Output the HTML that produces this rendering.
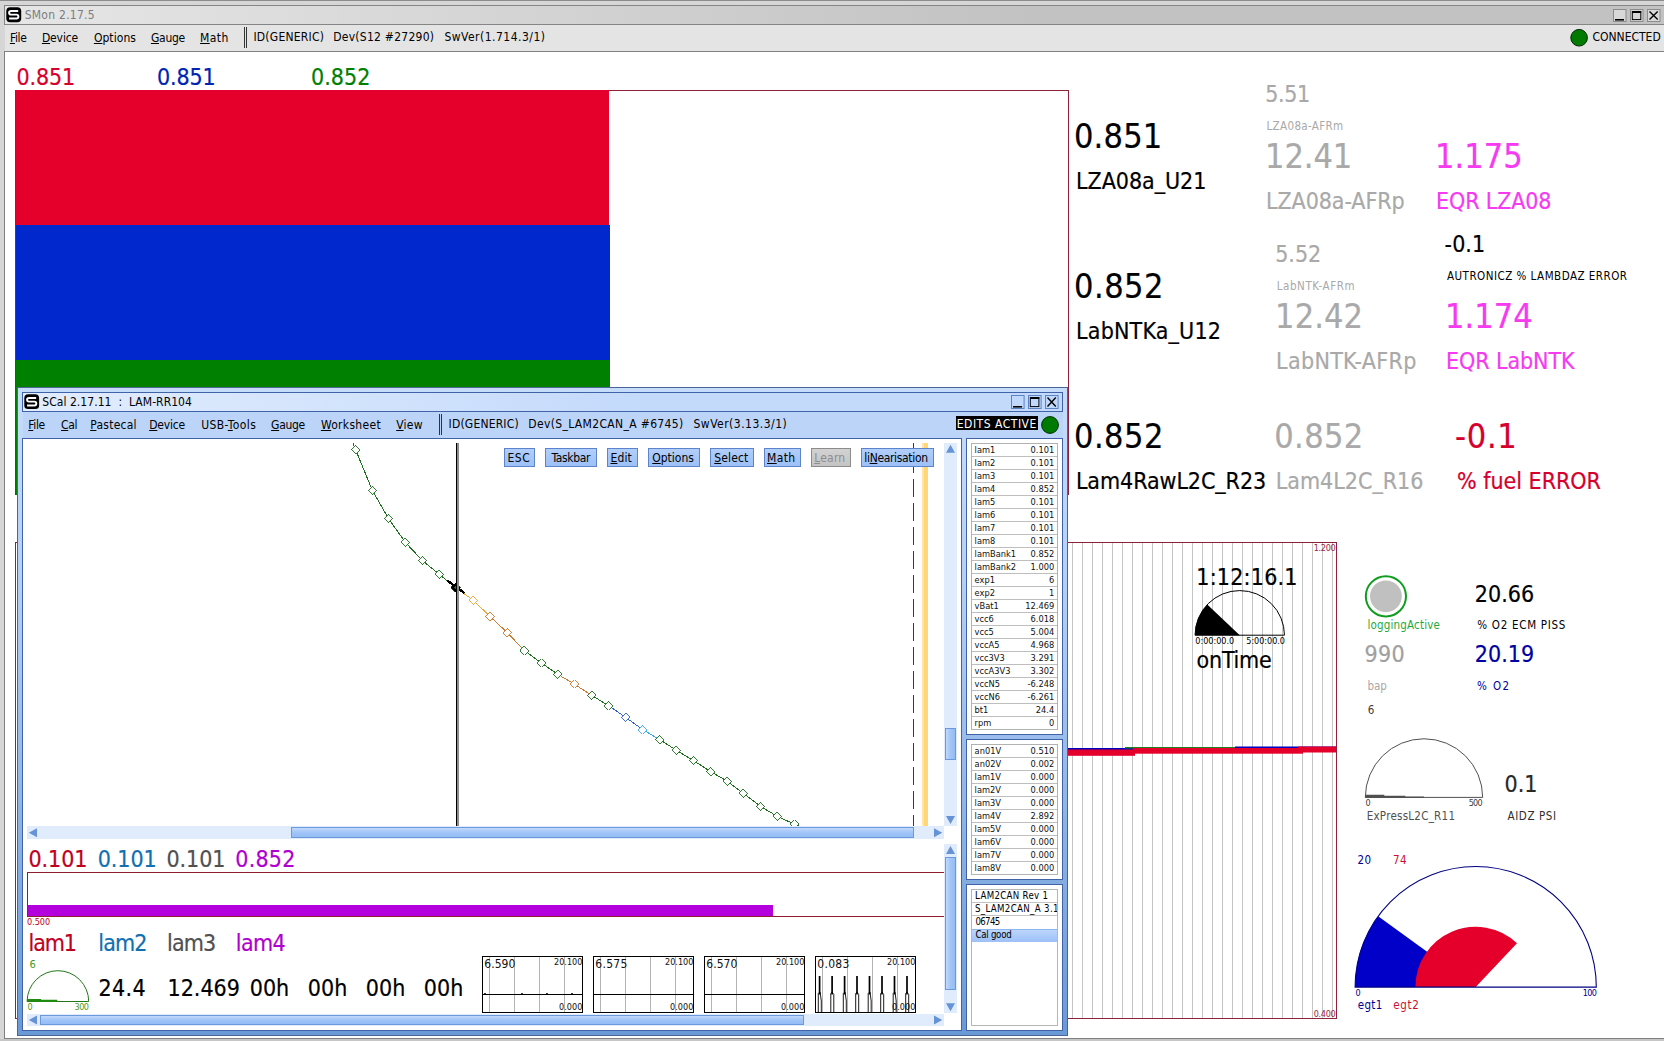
<!DOCTYPE html>
<html><head><meta charset="utf-8"><title>SMon 2.17.5</title>
<style>
html,body{margin:0;padding:0;}
body{width:1664px;height:1041px;overflow:hidden;background:#fff;position:relative;
 font-family:"DejaVu Sans Condensed","DejaVu Sans","Liberation Sans",sans-serif;font-stretch:condensed;}
.t{position:absolute;line-height:0;white-space:nowrap;}
.b{position:absolute;box-sizing:border-box;}
u{text-decoration:underline;text-underline-offset:1px;}
svg{position:absolute;overflow:visible;}
</style></head><body>

<div class="b" style="left:0px;top:0px;width:1664px;height:1041px;background:#d6d6d6;"></div>
<div class="b" style="left:0px;top:0px;width:1664px;height:1px;background:#8c8c8c;"></div>
<div class="b" style="left:4px;top:5px;width:1664px;height:20px;border:1px solid #858585;background:linear-gradient(90deg,#e6e6e6 0,#c2c2c2 62%,#c2c2c2 100%);"></div>
<div class="b" style="left:5px;top:25px;width:1660px;height:26px;background:#e4e4e4;"></div>
<div class="b" style="left:4px;top:51px;width:1664px;height:988px;background:#fff;border:1px solid #808080;border-right:none;"></div>
<div class="b" style="left:0px;top:1039px;width:1664px;height:2px;background:#c6c6c6;"></div>
<svg style="left:6.2px;top:7.2px" width="15.5" height="15.5" viewBox="0 0 16 16"><rect x="0.3" y="0.3" width="15.4" height="15.4" rx="4" fill="#000"/><path d="M12.6 4.1H5.2Q3.2 4.1 3.2 6T5.2 7.9H10.8Q12.8 7.9 12.8 9.9T10.8 11.9H3.2" fill="none" stroke="#fff" stroke-width="2"/></svg>
<div class="t" style="left:24.70px;top:15.00px;font-size:12px;color:#7d7d7d;letter-spacing:0.255px;">SMon 2.17.5</div>
<svg style="left:1613px;top:8.5px" width="13.5" height="13" viewBox="0 0 13.5 13"><rect x="0.5" y="0.5" width="12.5" height="12" fill="#d8d8d8" stroke="#8c8c8c"/><path d="M2 10.8H11.0" stroke="#000" stroke-width="1.6"/></svg>
<svg style="left:1630px;top:8.5px" width="13.5" height="13" viewBox="0 0 13.5 13"><rect x="0.5" y="0.5" width="12.5" height="12" fill="#d8d8d8" stroke="#8c8c8c"/><rect x="2.3" y="2.6" width="8.5" height="8" fill="none" stroke="#000" stroke-width="1"/><path d="M2 3H11.2" stroke="#000" stroke-width="2"/></svg>
<svg style="left:1647px;top:8.5px" width="13.5" height="13" viewBox="0 0 13.5 13"><rect x="0.5" y="0.5" width="12.5" height="12" fill="#d8d8d8" stroke="#8c8c8c"/><path d="M2.5 2.5L10.7 10.5M10.7 2.5L2.5 10.5" stroke="#000" stroke-width="1.4"/></svg>
<div class="t" style="left:9.90px;top:38.00px;font-size:12px;color:#000;letter-spacing:-0.313px;"><u>F</u>ile</div>
<div class="t" style="left:41.90px;top:38.00px;font-size:12px;color:#000;letter-spacing:-0.116px;"><u>D</u>evice</div>
<div class="t" style="left:93.90px;top:38.00px;font-size:12px;color:#000;letter-spacing:0.062px;"><u>O</u>ptions</div>
<div class="t" style="left:150.90px;top:38.00px;font-size:12px;color:#000;letter-spacing:-0.245px;"><u>G</u>auge</div>
<div class="t" style="left:200.10px;top:38.00px;font-size:12px;color:#000;letter-spacing:0.413px;"><u>M</u>ath</div>
<div class="b" style="left:244px;top:27px;width:1px;height:21px;background:#333;"></div>
<div class="b" style="left:246px;top:27px;width:1px;height:21px;background:#333;"></div>
<div class="t" style="left:253.40px;top:37.00px;font-size:12px;color:#000;letter-spacing:0.229px;">ID(GENERIC)</div>
<div class="t" style="left:333.20px;top:37.00px;font-size:12px;color:#000;letter-spacing:0.260px;">Dev(S12 #27290)</div>
<div class="t" style="left:444.40px;top:37.00px;font-size:12px;color:#000;letter-spacing:0.485px;">SwVer(1.714.3/1)</div>
<svg style="left:1569px;top:28px" width="20" height="20"><circle cx="10.1" cy="9.75" r="8.3" fill="#007a00" stroke="#002800" stroke-width="1"/></svg>
<div class="t" style="left:1592.50px;top:37.00px;font-size:12px;color:#000;letter-spacing:-0.007px;">CONNECTED</div>
<div class="t" style="left:16.50px;top:77.00px;font-size:23px;color:#d8002c;letter-spacing:-0.114px;-webkit-text-stroke:0.2px;">0.851</div>
<div class="t" style="left:156.90px;top:77.00px;font-size:23px;color:#0024b0;letter-spacing:-0.114px;-webkit-text-stroke:0.2px;">0.851</div>
<div class="t" style="left:311.00px;top:77.00px;font-size:23px;color:#008000;letter-spacing:0.048px;-webkit-text-stroke:0.2px;">0.852</div>
<div class="b" style="left:15px;top:90px;width:1054px;height:405px;border:1px solid #8e2038;border-bottom:none;"></div>
<div class="b" style="left:16px;top:90px;width:593px;height:135px;background:#e4002b;"></div>
<div class="b" style="left:16px;top:225px;width:594px;height:135px;background:#0028cc;"></div>
<div class="b" style="left:16px;top:360px;width:594px;height:135px;background:#008000;"></div>
<div class="t" style="left:1074.00px;top:136.00px;font-size:34px;color:#000;letter-spacing:0.167px;-webkit-text-stroke:0.2px;">0.851</div>
<div class="t" style="left:1076.10px;top:181.00px;font-size:23px;color:#000;letter-spacing:-0.039px;-webkit-text-stroke:0.2px;">LZA08a_U21</div>
<div class="t" style="left:1265.25px;top:94.00px;font-size:23px;color:#a9a9a9;letter-spacing:-0.348px;-webkit-text-stroke:0.2px;">5.51</div>
<div class="t" style="left:1266.50px;top:126.00px;font-size:11.5px;color:#a9a9a9;letter-spacing:0.348px;">LZA08a-AFRm</div>
<div class="t" style="left:1265.10px;top:156.00px;font-size:34px;color:#a9a9a9;letter-spacing:-0.108px;-webkit-text-stroke:0.2px;">12.41</div>
<div class="t" style="left:1266.10px;top:201.00px;font-size:23px;color:#a9a9a9;letter-spacing:-0.084px;-webkit-text-stroke:0.2px;">LZA08a-AFRp</div>
<div class="t" style="left:1435.10px;top:156.00px;font-size:34px;color:#f63af0;letter-spacing:0.017px;-webkit-text-stroke:0.2px;">1.175</div>
<div class="t" style="left:1436.10px;top:201.00px;font-size:23px;color:#f63af0;letter-spacing:-0.145px;-webkit-text-stroke:0.2px;">EQR LZA08</div>
<div class="t" style="left:1074.00px;top:286.00px;font-size:34px;color:#000;letter-spacing:0.479px;-webkit-text-stroke:0.2px;">0.852</div>
<div class="t" style="left:1076.10px;top:331.00px;font-size:23px;color:#000;letter-spacing:0.170px;-webkit-text-stroke:0.2px;">LabNTKa_U12</div>
<div class="t" style="left:1275.25px;top:254.00px;font-size:23px;color:#a9a9a9;letter-spacing:-0.048px;-webkit-text-stroke:0.2px;">5.52</div>
<div class="t" style="left:1276.75px;top:286.00px;font-size:11.5px;color:#a9a9a9;letter-spacing:0.565px;">LabNTK-AFRm</div>
<div class="t" style="left:1275.10px;top:316.00px;font-size:34px;color:#a9a9a9;letter-spacing:0.104px;-webkit-text-stroke:0.2px;">12.42</div>
<div class="t" style="left:1276.10px;top:361.00px;font-size:23px;color:#a9a9a9;letter-spacing:0.315px;-webkit-text-stroke:0.2px;">LabNTK-AFRp</div>
<div class="t" style="left:1444.60px;top:244.00px;font-size:23px;color:#000;letter-spacing:0.067px;-webkit-text-stroke:0.2px;">-0.1</div>
<div class="t" style="left:1447.00px;top:276.00px;font-size:11.5px;color:#000;letter-spacing:0.484px;">AUTRONICZ % LAMBDAZ ERROR</div>
<div class="t" style="left:1445.10px;top:316.00px;font-size:34px;color:#f63af0;letter-spacing:0.017px;-webkit-text-stroke:0.2px;">1.174</div>
<div class="t" style="left:1446.10px;top:361.00px;font-size:23px;color:#f63af0;letter-spacing:-0.095px;-webkit-text-stroke:0.2px;">EQR LabNTK</div>
<div class="t" style="left:1074.00px;top:436.00px;font-size:34px;color:#000;letter-spacing:0.454px;-webkit-text-stroke:0.2px;">0.852</div>
<div class="t" style="left:1075.90px;top:481.00px;font-size:23px;color:#000;letter-spacing:-0.070px;-webkit-text-stroke:0.2px;">Lam4RawL2C_R23</div>
<div class="t" style="left:1274.25px;top:436.00px;font-size:34px;color:#a9a9a9;letter-spacing:0.367px;-webkit-text-stroke:0.2px;">0.852</div>
<div class="t" style="left:1275.75px;top:481.00px;font-size:23px;color:#a9a9a9;letter-spacing:-0.004px;-webkit-text-stroke:0.2px;">Lam4L2C_R16</div>
<div class="t" style="left:1455.00px;top:436.00px;font-size:34px;color:#d6002e;letter-spacing:0.697px;-webkit-text-stroke:0.2px;">-0.1</div>
<div class="t" style="left:1457.10px;top:481.00px;font-size:23px;color:#d6002e;letter-spacing:-0.026px;-webkit-text-stroke:0.2px;">% fuel ERROR</div>
<svg style="left:0;top:0" width="1664" height="1041">
<path d="M1072.5 543V1018M1082.5 543V1018M1092.5 543V1018M1102.5 543V1018M1112.5 543V1018M1122.5 543V1018M1132.5 543V1018M1142.5 543V1018M1152.5 543V1018M1162.5 543V1018M1172.5 543V1018M1182.5 543V1018M1192.5 543V1018M1202.5 543V1018M1212.5 543V1018M1222.5 543V1018M1232.5 543V1018M1242.5 543V1018M1252.5 543V1018M1262.5 543V1018M1272.5 543V1018M1282.5 543V1018M1292.5 543V1018M1302.5 543V1018M1312.5 543V1018M1322.5 543V1018M1332.5 543V1018" stroke="#c4c4c4" stroke-width="1" fill="none"/>
<rect x="1067" y="748" width="66" height="2" fill="#0000c0"/>
<rect x="1067" y="749.5" width="68" height="6.3" fill="#e4002b"/>
<rect x="1125" y="747" width="110" height="1.5" fill="#208020"/>
<rect x="1235" y="746.5" width="102" height="1.5" fill="#0000c0"/>
<rect x="1133" y="748" width="170" height="5.7" fill="#e4002b"/>
<rect x="1298" y="746.5" width="39" height="6" fill="#e4002b"/>
<rect x="15.5" y="542.5" width="1321" height="476" fill="none" stroke="#8e2038" stroke-width="1"/>
<path d="M1195.05 635.2A44.7 44.7 0 0 1 1284.45 635.2Z" fill="none" stroke="#000" stroke-width="1"/>
<path d="M1239.75 635.2L1195.05 635.2A44.7 44.7 0 0 1 1207.27 604.49Z" fill="#000"/>
<path d="M1365.3 797.4A58.7 58.7 0 0 1 1482.7 797.4Z" fill="#fff" stroke="#505050" stroke-width="1"/>
<path d="M1365.3 797.9V794.8H1384.3V795.6999999999999H1405.3V796.6H1424V797.9Z" fill="#505050"/>
<path d="M1475.7 987.1L1355.1000000000001 987.1A120.6 120.6 0 0 1 1378.13 916.21Z" fill="#0000c8"/>
<path d="M1475.7 987.1L1415.4 987.1A60.3 60.3 0 0 1 1516.98 943.14Z" fill="#e4002b"/>
<path d="M1355.1000000000001 987.1A120.6 120.6 0 0 1 1596.3 987.1Z" fill="none" stroke="#000080" stroke-width="1.1"/>
<circle cx="1385.9" cy="596.3" r="20.1" fill="#fff" stroke="#0f9d1f" stroke-width="2"/><circle cx="1385.9" cy="596.3" r="15.9" fill="#c0c0c0"/>
</svg>
<div class="t" style="left:1313.70px;top:548.00px;font-size:9px;color:#a0203c;letter-spacing:-0.280px;">1.200</div>
<div class="t" style="left:1313.70px;top:1014.00px;font-size:9px;color:#a0203c;letter-spacing:-0.280px;">0.400</div>
<div class="t" style="left:1196.30px;top:577.00px;font-size:23px;color:#000;letter-spacing:0.209px;-webkit-text-stroke:0.2px;">1:12:16.1</div>
<div class="t" style="left:1196.60px;top:660.00px;font-size:23px;color:#000;letter-spacing:-0.242px;-webkit-text-stroke:0.2px;">onTime</div>
<div class="t" style="left:1195.30px;top:641.00px;font-size:9px;color:#000;letter-spacing:-0.010px;">0:00:00.0</div>
<div class="t" style="left:1246.30px;top:641.00px;font-size:9px;color:#000;letter-spacing:-0.035px;">5:00:00.0</div>
<div class="t" style="left:1367.50px;top:625.00px;font-size:11.5px;color:#1fa83a;letter-spacing:0.170px;">loggingActive</div>
<div class="t" style="left:1474.80px;top:594.00px;font-size:23px;color:#000;letter-spacing:0.036px;-webkit-text-stroke:0.2px;">20.66</div>
<div class="t" style="left:1477.30px;top:625.00px;font-size:11.5px;color:#000;letter-spacing:0.712px;">% O2 ECM PISS</div>
<div class="t" style="left:1364.60px;top:654.00px;font-size:23px;color:#a0a0a0;letter-spacing:0.238px;-webkit-text-stroke:0.2px;">990</div>
<div class="t" style="left:1367.50px;top:686.00px;font-size:11.5px;color:#a8a8a8;letter-spacing:-0.080px;">bap</div>
<div class="t" style="left:1474.80px;top:654.00px;font-size:23px;color:#0000a0;letter-spacing:0.036px;-webkit-text-stroke:0.2px;">20.19</div>
<div class="t" style="left:1477.00px;top:686.00px;font-size:11.5px;color:#0000a0;letter-spacing:1.447px;">% O2</div>
<div class="t" style="left:1367.70px;top:710.00px;font-size:11.5px;color:#404040;letter-spacing:0.000px;">6</div>
<div class="t" style="left:1365.50px;top:803.00px;font-size:9px;color:#404040;letter-spacing:-0.700px;">0</div>
<div class="t" style="left:1468.70px;top:803.00px;font-size:9px;color:#404040;letter-spacing:-0.750px;">500</div>
<div class="t" style="left:1366.70px;top:816.00px;font-size:11.5px;color:#505050;letter-spacing:0.258px;">ExPressL2C_R11</div>
<div class="t" style="left:1504.50px;top:784.00px;font-size:23px;color:#282828;letter-spacing:0.034px;-webkit-text-stroke:0.2px;">0.1</div>
<div class="t" style="left:1507.50px;top:816.00px;font-size:11.5px;color:#303030;letter-spacing:0.604px;">AIDZ PSI</div>
<div class="t" style="left:1357.40px;top:860.00px;font-size:11.5px;color:#000090;letter-spacing:0.619px;">20</div>
<div class="t" style="left:1392.90px;top:860.00px;font-size:11.5px;color:#cc1030;letter-spacing:0.619px;">74</div>
<div class="t" style="left:1355.60px;top:993.00px;font-size:9px;color:#000090;letter-spacing:-0.700px;">0</div>
<div class="t" style="left:1582.80px;top:993.00px;font-size:9px;color:#000090;letter-spacing:-0.700px;">100</div>
<div class="t" style="left:1357.80px;top:1005.00px;font-size:11.5px;color:#000090;letter-spacing:0.303px;">egt1</div>
<div class="t" style="left:1393.30px;top:1005.00px;font-size:11.5px;color:#cc1030;letter-spacing:0.636px;">egt2</div>
<div class="b" style="left:17px;top:387px;width:1051px;height:649px;border:1px solid #4a6696;background:linear-gradient(180deg,#c6dcfb 0,#b4cff6 30%,#6a9ad6 100%);"></div>
<div class="b" style="left:22px;top:392px;width:1041px;height:20px;border:1px solid #3f62a8;background:linear-gradient(90deg,#e2edfd 0,#c4dafb 60%,#c4dafb 100%);"></div>
<svg style="left:24.3px;top:394.2px" width="15.4" height="15.4" viewBox="0 0 16 16"><rect x="0.3" y="0.3" width="15.4" height="15.4" rx="4" fill="#000"/><path d="M12.6 4.1H5.2Q3.2 4.1 3.2 6T5.2 7.9H10.8Q12.8 7.9 12.8 9.9T10.8 11.9H3.2" fill="none" stroke="#fff" stroke-width="2"/></svg>
<div class="t" style="left:42.30px;top:402.00px;font-size:12px;color:#000;letter-spacing:0.044px;">SCal 2.17.11&nbsp; :&nbsp; LAM-RR104</div>
<svg style="left:1011.0px;top:394.6px" width="13.6" height="14" viewBox="0 0 13.6 14"><rect x="0.5" y="0.5" width="12.6" height="13" fill="#c0d8fb" stroke="#5c82c8"/><path d="M2 11.8H11.1" stroke="#000" stroke-width="1.6"/></svg>
<svg style="left:1028.1px;top:394.6px" width="13.6" height="14" viewBox="0 0 13.6 14"><rect x="0.5" y="0.5" width="12.6" height="13" fill="#c0d8fb" stroke="#5c82c8"/><rect x="2.3" y="2.6" width="8.6" height="9" fill="none" stroke="#000" stroke-width="1"/><path d="M2 3H11.3" stroke="#000" stroke-width="2"/></svg>
<svg style="left:1045.2px;top:394.6px" width="13.6" height="14" viewBox="0 0 13.6 14"><rect x="0.5" y="0.5" width="12.6" height="13" fill="#c0d8fb" stroke="#5c82c8"/><path d="M2.5 2.5L10.8 11.5M10.8 2.5L2.5 11.5" stroke="#000" stroke-width="1.4"/></svg>
<div class="b" style="left:23px;top:412px;width:1040px;height:26px;background:#bcd4f8;"></div>
<div class="t" style="left:28.30px;top:425.00px;font-size:12px;color:#000;letter-spacing:-0.379px;"><u>F</u>ile</div>
<div class="t" style="left:61.10px;top:425.00px;font-size:12px;color:#000;letter-spacing:-0.378px;"><u>C</u>al</div>
<div class="t" style="left:90.20px;top:425.00px;font-size:12px;color:#000;letter-spacing:0.252px;"><u>P</u>astecal</div>
<div class="t" style="left:149.20px;top:425.00px;font-size:12px;color:#000;letter-spacing:-0.176px;"><u>D</u>evice</div>
<div class="t" style="left:201.20px;top:425.00px;font-size:12px;color:#000;letter-spacing:0.410px;">USB-<u>T</u>ools</div>
<div class="t" style="left:271.10px;top:425.00px;font-size:12px;color:#000;letter-spacing:-0.320px;"><u>G</u>auge</div>
<div class="t" style="left:320.90px;top:425.00px;font-size:12px;color:#000;letter-spacing:0.310px;"><u>W</u>orksheet</div>
<div class="t" style="left:396.20px;top:425.00px;font-size:12px;color:#000;letter-spacing:0.245px;"><u>V</u>iew</div>
<div class="b" style="left:439px;top:414px;width:1px;height:21px;background:#333;"></div>
<div class="b" style="left:441px;top:414px;width:1px;height:21px;background:#333;"></div>
<div class="t" style="left:448.60px;top:424.00px;font-size:12px;color:#000;letter-spacing:0.179px;">ID(GENERIC)</div>
<div class="t" style="left:528.30px;top:424.00px;font-size:12px;color:#000;letter-spacing:0.348px;">Dev(S_LAM2CAN_A #6745)</div>
<div class="t" style="left:693.50px;top:424.00px;font-size:12px;color:#000;letter-spacing:0.481px;">SwVer(3.13.3/1)</div>
<div class="b" style="left:956px;top:416px;width:81.8px;height:13.8px;background:#000;"></div>
<div class="t" style="left:956.75px;top:424.00px;font-size:12px;color:#fff;letter-spacing:0.517px;">EDITS ACTIVE</div>
<svg style="left:1040px;top:415px" width="20" height="20"><circle cx="10" cy="10" r="8.4" fill="#007a00" stroke="#003000" stroke-width="1"/></svg>
<div class="b" style="left:22px;top:438px;width:940px;height:593px;border:1px solid #3f62a8;background:#fff;"></div>
<div class="b" style="left:966px;top:438px;width:97px;height:297px;border:1px solid #3f62a8;background:#fff;"></div>
<div class="b" style="left:966px;top:739px;width:97px;height:141px;border:1px solid #3f62a8;background:#fff;"></div>
<div class="b" style="left:966px;top:884px;width:97px;height:147px;border:1px solid #3f62a8;background:#fff;"></div>
<svg style="left:23px;top:443px" width="922" height="383" viewBox="23 443 922 383"><defs><clipPath id="cp"><rect x="23" y="443" width="922" height="383"/></clipPath></defs><g clip-path="url(#cp)" fill="none" stroke-width="1" shape-rendering="crispEdges">
<path d="M353 443L355.5 449.5" stroke="#1f6f1f"/>
<path d="M355.5 449.5L372.5 490.7" stroke="#1f6f1f"/>
<path d="M372.5 490.7L388.5 518.7" stroke="#1f6f1f"/>
<path d="M388.5 518.7L405.4 542.4" stroke="#1f6f1f"/>
<path d="M405.4 542.4L422.4 560.6" stroke="#1f6f1f"/>
<path d="M422.4 560.6L439.4 574.4" stroke="#1f6f1f"/>
<path d="M439.4 574.4L455.9 587.9" stroke="#1f6f1f"/>
<path d="M455.9 587.9L473.4 600.3" stroke="#e8a840"/>
<path d="M473.4 600.3L490.1 616.6" stroke="#e8a840"/>
<path d="M490.1 616.6L507.3 632.6" stroke="#cc7a30"/>
<path d="M507.3 632.6L524.3 650.5" stroke="#cc7a30"/>
<path d="M524.3 650.5L541.3 663" stroke="#1f6f1f"/>
<path d="M541.3 663L557.8 674.3" stroke="#1f6f1f"/>
<path d="M557.8 674.3L574.3 684.1" stroke="#cc7a30"/>
<path d="M574.3 684.1L591.6 695.3" stroke="#cc7a30"/>
<path d="M591.6 695.3L608.4 705.5" stroke="#1f6f1f"/>
<path d="M608.4 705.5L625.7 717.4" stroke="#2f62c8"/>
<path d="M625.7 717.4L642.6 729.5" stroke="#2f62c8"/>
<path d="M642.6 729.5L659.5 739.5" stroke="#38a8e8"/>
<path d="M659.5 739.5L676.3 750.2" stroke="#1f6f1f"/>
<path d="M676.3 750.2L693.6 760.6" stroke="#1f6f1f"/>
<path d="M693.6 760.6L710.5 771.5" stroke="#1f6f1f"/>
<path d="M710.5 771.5L727.3 781.3" stroke="#1f6f1f"/>
<path d="M727.3 781.3L743.4 793.3" stroke="#1f6f1f"/>
<path d="M743.4 793.3L760.5 806.4" stroke="#1f6f1f"/>
<path d="M760.5 806.4L777.4 816.4" stroke="#1f6f1f"/>
<path d="M777.4 816.4L794.4 824.2" stroke="#1f6f1f"/>
<path d="M794.4 824.2L811 831" stroke="#1f6f1f"/>
<path d="M351.2 449.5L355.5 445.2L359.8 449.5L355.5 453.8Z" fill="#fff" stroke="#1f6f1f" stroke-width="0.9"/>
<path d="M368.2 490.7L372.5 486.4L376.8 490.7L372.5 495.0Z" fill="#fff" stroke="#1f6f1f" stroke-width="0.9"/>
<path d="M384.2 518.7L388.5 514.4L392.8 518.7L388.5 523.0Z" fill="#fff" stroke="#1f6f1f" stroke-width="0.9"/>
<path d="M401.1 542.4L405.4 538.1L409.7 542.4L405.4 546.7Z" fill="#fff" stroke="#1f6f1f" stroke-width="0.9"/>
<path d="M418.1 560.6L422.4 556.3L426.7 560.6L422.4 564.9Z" fill="#fff" stroke="#1f6f1f" stroke-width="0.9"/>
<path d="M435.1 574.4L439.4 570.1L443.7 574.4L439.4 578.7Z" fill="#fff" stroke="#1f6f1f" stroke-width="0.9"/>
<path d="M469.1 600.3L473.4 596.0L477.7 600.3L473.4 604.6Z" fill="#fff" stroke="#e8a840" stroke-width="0.9"/>
<path d="M485.8 616.6L490.1 612.3L494.4 616.6L490.1 620.9Z" fill="#fff" stroke="#cc7a30" stroke-width="0.9"/>
<path d="M503.0 632.6L507.3 628.3L511.6 632.6L507.3 636.9Z" fill="#fff" stroke="#cc7a30" stroke-width="0.9"/>
<path d="M520.0 650.5L524.3 646.2L528.6 650.5L524.3 654.8Z" fill="#fff" stroke="#1f6f1f" stroke-width="0.9"/>
<path d="M537.0 663.0L541.3 658.7L545.6 663.0L541.3 667.3Z" fill="#fff" stroke="#1f6f1f" stroke-width="0.9"/>
<path d="M553.5 674.3L557.8 670.0L562.1 674.3L557.8 678.6Z" fill="#fff" stroke="#1f6f1f" stroke-width="0.9"/>
<path d="M570.0 684.1L574.3 679.8L578.6 684.1L574.3 688.4Z" fill="#fff" stroke="#cc7a30" stroke-width="0.9"/>
<path d="M587.3 695.3L591.6 691.0L595.9 695.3L591.6 699.6Z" fill="#fff" stroke="#1f6f1f" stroke-width="0.9"/>
<path d="M604.1 705.5L608.4 701.2L612.7 705.5L608.4 709.8Z" fill="#fff" stroke="#1f6f1f" stroke-width="0.9"/>
<path d="M621.4 717.4L625.7 713.1L630.0 717.4L625.7 721.7Z" fill="#fff" stroke="#2f62c8" stroke-width="0.9"/>
<path d="M638.3 729.5L642.6 725.2L646.9 729.5L642.6 733.8Z" fill="#fff" stroke="#38a8e8" stroke-width="0.9"/>
<path d="M655.2 739.5L659.5 735.2L663.8 739.5L659.5 743.8Z" fill="#fff" stroke="#1f6f1f" stroke-width="0.9"/>
<path d="M672.0 750.2L676.3 745.9L680.6 750.2L676.3 754.5Z" fill="#fff" stroke="#1f6f1f" stroke-width="0.9"/>
<path d="M689.3 760.6L693.6 756.3L697.9 760.6L693.6 764.9Z" fill="#fff" stroke="#1f6f1f" stroke-width="0.9"/>
<path d="M706.2 771.5L710.5 767.2L714.8 771.5L710.5 775.8Z" fill="#fff" stroke="#1f6f1f" stroke-width="0.9"/>
<path d="M723.0 781.3L727.3 777.0L731.6 781.3L727.3 785.6Z" fill="#fff" stroke="#1f6f1f" stroke-width="0.9"/>
<path d="M739.1 793.3L743.4 789.0L747.7 793.3L743.4 797.6Z" fill="#fff" stroke="#1f6f1f" stroke-width="0.9"/>
<path d="M756.2 806.4L760.5 802.1L764.8 806.4L760.5 810.7Z" fill="#fff" stroke="#1f6f1f" stroke-width="0.9"/>
<path d="M773.1 816.4L777.4 812.1L781.7 816.4L777.4 820.7Z" fill="#fff" stroke="#1f6f1f" stroke-width="0.9"/>
<path d="M790.1 824.2L794.4 819.9L798.7 824.2L794.4 828.5Z" fill="#fff" stroke="#1f6f1f" stroke-width="0.9"/>
<path d="M806.7 831.0L811.0 826.7L815.3 831.0L811.0 835.3Z" fill="#fff" stroke="#1f6f1f" stroke-width="0.9"/>
<path d="M447.3 580.6L464.6 593.1" stroke="#000" stroke-width="2.4"/><path d="M450.8 587.6L455.6 583L460.2 587.6L455.6 592.4Z" fill="#000" stroke="#000" stroke-width="0.8"/><path d="M453.6 587.6l3 -1.8v3.6z" fill="#1f6f1f" stroke="none"/>
<rect x="456" y="443" width="1.2" height="383" fill="#000" stroke="none"/><rect x="457.2" y="443" width="1.8" height="383" fill="#8c8c8c" stroke="none"/>
<path d="M913.5 443V826" stroke="#8e1420" stroke-width="1.1" stroke-dasharray="18 6" stroke-dashoffset="12"/>
<rect x="922" y="443" width="6.3" height="383" fill="#ffd678" stroke="none"/><rect x="922" y="443" width="1.5" height="383" fill="#ffe6a8" stroke="none"/>
</g></svg>
<div class="b" style="left:504px;top:448px;width:31px;height:19px;border:1px solid #5c84cc;background:linear-gradient(180deg,#b2cefa,#9cc0f8);"></div>
<div class="t" style="left:507.50px;top:458.00px;font-size:12px;color:#000;letter-spacing:0.537px;">ESC</div>
<div class="b" style="left:545px;top:448px;width:52px;height:19px;border:1px solid #5c84cc;background:linear-gradient(180deg,#b2cefa,#9cc0f8);"></div>
<div class="t" style="left:551.50px;top:458.00px;font-size:12px;color:#000;letter-spacing:-0.345px;">Taskbar</div>
<div class="b" style="left:607px;top:448px;width:31px;height:19px;border:1px solid #5c84cc;background:linear-gradient(180deg,#b2cefa,#9cc0f8);"></div>
<div class="t" style="left:610.50px;top:458.00px;font-size:12px;color:#000;letter-spacing:0.108px;"><u>E</u>dit</div>
<div class="b" style="left:648px;top:448px;width:52px;height:19px;border:1px solid #5c84cc;background:linear-gradient(180deg,#b2cefa,#9cc0f8);"></div>
<div class="t" style="left:652.25px;top:458.00px;font-size:12px;color:#000;letter-spacing:-0.005px;"><u>O</u>ptions</div>
<div class="b" style="left:710px;top:448px;width:44px;height:19px;border:1px solid #5c84cc;background:linear-gradient(180deg,#b2cefa,#9cc0f8);"></div>
<div class="t" style="left:714.25px;top:458.00px;font-size:12px;color:#000;letter-spacing:0.134px;"><u>S</u>elect</div>
<div class="b" style="left:764px;top:448px;width:37px;height:19px;border:1px solid #5c84cc;background:linear-gradient(180deg,#b2cefa,#9cc0f8);"></div>
<div class="t" style="left:767.00px;top:458.00px;font-size:12px;color:#000;letter-spacing:0.363px;"><u>M</u>ath</div>
<div class="b" style="left:811px;top:448px;width:40px;height:19px;border:1px solid #8c8c8c;background:linear-gradient(180deg,#d2d2d2,#c4c4c4);"></div>
<div class="t" style="left:814.25px;top:458.00px;font-size:12px;color:#8e8e8e;letter-spacing:0.191px;"><u>L</u>earn</div>
<div class="b" style="left:861px;top:448px;width:73px;height:19px;border:1px solid #5c84cc;background:linear-gradient(180deg,#b2cefa,#9cc0f8);"></div>
<div class="t" style="left:864.30px;top:458.00px;font-size:12px;color:#000;letter-spacing:-0.329px;">li<u>N</u>earisation</div>
<div class="b" style="left:27px;top:826.2px;width:917px;height:12.4px;background:#e0ecfc;"></div>
<div class="b" style="left:291px;top:827.2px;width:622.8px;height:10.9px;border:1px solid #6c98dc;background:linear-gradient(180deg,#c2dafc 0,#a4c6f8 45%,#94bcf6 100%);"></div>
<svg style="left:0;top:0" width="1664" height="1041"><path d="M28.8 832.7l8.2 -4.5v9z" fill="#6593d5"/><path d="M942.2 832.7l-8.2 -4.5v9z" fill="#6593d5"/></svg>
<div class="b" style="left:944px;top:443px;width:13px;height:382.79999999999995px;background:#e0ecfc;"></div>
<div class="b" style="left:945px;top:728.3px;width:11px;height:31.300000000000068px;border:1px solid #6c98dc;background:linear-gradient(90deg,#c2dafc 0,#a4c6f8 45%,#94bcf6 100%);"></div>
<svg style="left:0;top:0" width="1664" height="1041"><path d="M950.5 444.8l-4.5 8h9z" fill="#6593d5"/><path d="M950.5 824.0l-4.5 -8h9z" fill="#6593d5"/></svg>
<div class="b" style="left:944px;top:844.3px;width:13px;height:168.70000000000005px;background:#e0ecfc;"></div>
<div class="b" style="left:945px;top:857.1px;width:11px;height:132.89999999999998px;border:1px solid #6c98dc;background:linear-gradient(90deg,#c2dafc 0,#a4c6f8 45%,#94bcf6 100%);"></div>
<svg style="left:0;top:0" width="1664" height="1041"><path d="M950.5 846.0999999999999l-4.5 8h9z" fill="#6593d5"/><path d="M950.5 1011.2l-4.5 -8h9z" fill="#6593d5"/></svg>
<div class="b" style="left:27px;top:1014px;width:917px;height:11.5px;background:#e0ecfc;"></div>
<div class="b" style="left:40px;top:1015px;width:763.6px;height:10.0px;border:1px solid #6c98dc;background:linear-gradient(180deg,#c2dafc 0,#a4c6f8 45%,#94bcf6 100%);"></div>
<svg style="left:0;top:0" width="1664" height="1041"><path d="M28.8 1020.05l8.2 -4.5v9z" fill="#6593d5"/><path d="M942.2 1020.05l-8.2 -4.5v9z" fill="#6593d5"/></svg>
<div class="t" style="left:28.50px;top:859.00px;font-size:23px;color:#c00020;letter-spacing:-0.077px;-webkit-text-stroke:0.2px;">0.101</div>
<div class="t" style="left:97.75px;top:859.00px;font-size:23px;color:#1070b0;letter-spacing:-0.077px;-webkit-text-stroke:0.2px;">0.101</div>
<div class="t" style="left:166.50px;top:859.00px;font-size:23px;color:#505050;letter-spacing:-0.077px;-webkit-text-stroke:0.2px;">0.101</div>
<div class="t" style="left:235.25px;top:859.00px;font-size:23px;color:#b000d0;letter-spacing:0.236px;-webkit-text-stroke:0.2px;">0.852</div>
<div class="b" style="left:27px;top:872px;width:917px;height:45px;border:1px solid #8e1e30;border-right:none;"></div>
<div class="b" style="left:28px;top:905px;width:745px;height:11px;background:#b400dc;"></div>
<div class="t" style="left:27.00px;top:922.00px;font-size:9px;color:#c00020;letter-spacing:-0.005px;">0.500</div>
<div class="t" style="left:28.50px;top:943.00px;font-size:23px;color:#c00020;letter-spacing:-1.113px;-webkit-text-stroke:0.2px;">lam1</div>
<div class="t" style="left:98.25px;top:943.00px;font-size:23px;color:#1070b0;letter-spacing:-0.863px;-webkit-text-stroke:0.2px;">lam2</div>
<div class="t" style="left:167.00px;top:943.00px;font-size:23px;color:#505050;letter-spacing:-0.863px;-webkit-text-stroke:0.2px;">lam3</div>
<div class="t" style="left:235.75px;top:943.00px;font-size:23px;color:#b000d0;letter-spacing:-0.613px;-webkit-text-stroke:0.2px;">lam4</div>
<div class="t" style="left:29.50px;top:964.50px;font-size:11px;color:#3c9a28;letter-spacing:0.750px;">6</div>
<svg style="left:0;top:0" width="1664" height="1041">
<path d="M27.099999999999998 1001.5A30.8 30.8 0 0 1 88.7 1001.5Z" fill="#fff" stroke="#207818" stroke-width="1"/>
<path d="M27.099999999999998 1002.0V998.9H41.099999999999994V999.8H57.099999999999994V1000.7H57.9V1002.0Z" fill="#1f8a10"/>
</svg>
<div class="t" style="left:27.50px;top:1007.00px;font-size:9px;color:#4c9a20;letter-spacing:-0.500px;">0</div>
<div class="t" style="left:74.50px;top:1007.00px;font-size:9px;color:#4c9a20;letter-spacing:-0.525px;">300</div>
<div class="t" style="left:98.50px;top:988.00px;font-size:23px;color:#000;letter-spacing:0.369px;-webkit-text-stroke:0.2px;">24.4</div>
<div class="t" style="left:167.50px;top:988.00px;font-size:23px;color:#000;letter-spacing:0.006px;-webkit-text-stroke:0.2px;">12.469</div>
<div class="t" style="left:249.75px;top:988.00px;font-size:23px;color:#000;letter-spacing:-0.037px;-webkit-text-stroke:0.2px;">00h</div>
<div class="t" style="left:307.75px;top:988.00px;font-size:23px;color:#000;letter-spacing:0.088px;-webkit-text-stroke:0.2px;">00h</div>
<div class="t" style="left:365.75px;top:988.00px;font-size:23px;color:#000;letter-spacing:0.088px;-webkit-text-stroke:0.2px;">00h</div>
<div class="t" style="left:423.75px;top:988.00px;font-size:23px;color:#000;letter-spacing:0.088px;-webkit-text-stroke:0.2px;">00h</div>
<svg style="left:482.25px;top:956px" width="101" height="57" viewBox="0 0 101 57">
<rect x="0.5" y="0.5" width="100" height="56" fill="#fff" stroke="#000"/>
<path d="M7.5 1V56M32.5 1V56M57.5 1V56M82.5 1V56" stroke="#b4b4b4" fill="none"/>
<path d="M1 38.5H100" stroke="#000" fill="none"/><path d="M2 38l1 -1l1 1M39 38l1 -1l1 1M64 38l1 -1l1 1M89 38l1 -1l1 1" stroke="#000" fill="none" stroke-width="0.8"/>
</svg>
<div class="t" style="left:484.25px;top:964.00px;font-size:12px;color:#101010;letter-spacing:0.055px;">6.590</div>
<div class="t" style="left:554.00px;top:962.00px;font-size:9px;color:#101010;letter-spacing:0.016px;">20.100</div>
<div class="t" style="left:559.00px;top:1007.00px;font-size:9px;color:#101010;letter-spacing:0.057px;">0.000</div>
<svg style="left:593.25px;top:956px" width="101" height="57" viewBox="0 0 101 57">
<rect x="0.5" y="0.5" width="100" height="56" fill="#fff" stroke="#000"/>
<path d="M7.5 1V56M32.5 1V56M57.5 1V56M82.5 1V56" stroke="#b4b4b4" fill="none"/>
<path d="M1 38.5H100" stroke="#000" fill="none"/>
</svg>
<div class="t" style="left:595.25px;top:964.00px;font-size:12px;color:#101010;letter-spacing:0.305px;">6.575</div>
<div class="t" style="left:665.00px;top:962.00px;font-size:9px;color:#101010;letter-spacing:0.016px;">20.100</div>
<div class="t" style="left:670.00px;top:1007.00px;font-size:9px;color:#101010;letter-spacing:0.057px;">0.000</div>
<svg style="left:704.25px;top:956px" width="101" height="57" viewBox="0 0 101 57">
<rect x="0.5" y="0.5" width="100" height="56" fill="#fff" stroke="#000"/>
<path d="M7.5 1V56M32.5 1V56M57.5 1V56M82.5 1V56" stroke="#b4b4b4" fill="none"/>
<path d="M1 38.5H100" stroke="#000" fill="none"/>
</svg>
<div class="t" style="left:706.25px;top:964.00px;font-size:12px;color:#101010;letter-spacing:0.055px;">6.570</div>
<div class="t" style="left:776.00px;top:962.00px;font-size:9px;color:#101010;letter-spacing:0.016px;">20.100</div>
<div class="t" style="left:781.00px;top:1007.00px;font-size:9px;color:#101010;letter-spacing:0.057px;">0.000</div>
<svg style="left:815.25px;top:956px" width="101" height="57" viewBox="0 0 101 57">
<rect x="0.5" y="0.5" width="100" height="56" fill="#fff" stroke="#000"/>
<path d="M7.5 1V56M32.5 1V56M57.5 1V56M82.5 1V56" stroke="#b4b4b4" fill="none"/>
<path d="M4.6 20V38.5M17.1 20V38.5M29.6 20V38.5M42.0 20V38.5M54.5 20V38.5M67.0 20V38.5M79.5 20V38.5M92.0 20V38.5" stroke="#000" fill="none" stroke-width="1.7"/><path d="M3.3 56V37.5L4.8 36M5.1 36L6.3 45V56M15.8 56V37.5L17.1 36L18.8 38.5V56M28.3 56V37.5L29.8 36M30.1 36L31.3 45V56M40.7 56V37.5L42.0 36L43.7 38.5V56M53.2 56V37.5L54.7 36M55.0 36L56.2 45V56M65.7 56V37.5L67.0 36L68.7 38.5V56M78.2 56V37.5L79.7 36M80.0 36L81.2 45V56M90.7 56V37.5L92.0 36L93.7 38.5V56" stroke="#000" fill="none" stroke-width="0.9"/>
</svg>
<div class="t" style="left:817.25px;top:964.00px;font-size:12px;color:#101010;letter-spacing:0.305px;">0.083</div>
<div class="t" style="left:887.00px;top:962.00px;font-size:9px;color:#101010;letter-spacing:0.016px;">20.100</div>
<div class="t" style="left:892.00px;top:1007.00px;font-size:9px;color:#101010;letter-spacing:0.057px;">0.000</div>
<div class="b" style="left:971px;top:443px;width:87px;height:287px;border:1px solid #b2b2b2;background:#fff;"></div>
<div class="t" style="left:974.60px;top:449.50px;font-size:9.2px;color:#101010;">lam1</div>
<div class="t" style="right:609.80px;top:449.50px;font-size:9.2px;color:#101010;">0.101</div>
<div class="b" style="left:972px;top:456px;width:85px;height:1px;background:#bebebe;"></div>
<div class="t" style="left:974.60px;top:462.50px;font-size:9.2px;color:#101010;">lam2</div>
<div class="t" style="right:609.80px;top:462.50px;font-size:9.2px;color:#101010;">0.101</div>
<div class="b" style="left:972px;top:469px;width:85px;height:1px;background:#bebebe;"></div>
<div class="t" style="left:974.60px;top:475.50px;font-size:9.2px;color:#101010;">lam3</div>
<div class="t" style="right:609.80px;top:475.50px;font-size:9.2px;color:#101010;">0.101</div>
<div class="b" style="left:972px;top:482px;width:85px;height:1px;background:#bebebe;"></div>
<div class="t" style="left:974.60px;top:488.50px;font-size:9.2px;color:#101010;">lam4</div>
<div class="t" style="right:609.80px;top:488.50px;font-size:9.2px;color:#101010;">0.852</div>
<div class="b" style="left:972px;top:495px;width:85px;height:1px;background:#bebebe;"></div>
<div class="t" style="left:974.60px;top:501.50px;font-size:9.2px;color:#101010;">lam5</div>
<div class="t" style="right:609.80px;top:501.50px;font-size:9.2px;color:#101010;">0.101</div>
<div class="b" style="left:972px;top:508px;width:85px;height:1px;background:#bebebe;"></div>
<div class="t" style="left:974.60px;top:514.50px;font-size:9.2px;color:#101010;">lam6</div>
<div class="t" style="right:609.80px;top:514.50px;font-size:9.2px;color:#101010;">0.101</div>
<div class="b" style="left:972px;top:521px;width:85px;height:1px;background:#bebebe;"></div>
<div class="t" style="left:974.60px;top:527.50px;font-size:9.2px;color:#101010;">lam7</div>
<div class="t" style="right:609.80px;top:527.50px;font-size:9.2px;color:#101010;">0.101</div>
<div class="b" style="left:972px;top:534px;width:85px;height:1px;background:#bebebe;"></div>
<div class="t" style="left:974.60px;top:540.50px;font-size:9.2px;color:#101010;">lam8</div>
<div class="t" style="right:609.80px;top:540.50px;font-size:9.2px;color:#101010;">0.101</div>
<div class="b" style="left:972px;top:547px;width:85px;height:1px;background:#bebebe;"></div>
<div class="t" style="left:974.60px;top:553.50px;font-size:9.2px;color:#101010;">lamBank1</div>
<div class="t" style="right:609.80px;top:553.50px;font-size:9.2px;color:#101010;">0.852</div>
<div class="b" style="left:972px;top:560px;width:85px;height:1px;background:#bebebe;"></div>
<div class="t" style="left:974.60px;top:566.50px;font-size:9.2px;color:#101010;">lamBank2</div>
<div class="t" style="right:609.80px;top:566.50px;font-size:9.2px;color:#101010;">1.000</div>
<div class="b" style="left:972px;top:573px;width:85px;height:1px;background:#bebebe;"></div>
<div class="t" style="left:974.60px;top:579.50px;font-size:9.2px;color:#101010;">exp1</div>
<div class="t" style="right:609.80px;top:579.50px;font-size:9.2px;color:#101010;">6</div>
<div class="b" style="left:972px;top:586px;width:85px;height:1px;background:#bebebe;"></div>
<div class="t" style="left:974.60px;top:592.50px;font-size:9.2px;color:#101010;">exp2</div>
<div class="t" style="right:609.80px;top:592.50px;font-size:9.2px;color:#101010;">1</div>
<div class="b" style="left:972px;top:599px;width:85px;height:1px;background:#bebebe;"></div>
<div class="t" style="left:974.60px;top:605.50px;font-size:9.2px;color:#101010;">vBat1</div>
<div class="t" style="right:609.80px;top:605.50px;font-size:9.2px;color:#101010;">12.469</div>
<div class="b" style="left:972px;top:612px;width:85px;height:1px;background:#bebebe;"></div>
<div class="t" style="left:974.60px;top:618.50px;font-size:9.2px;color:#101010;">vcc6</div>
<div class="t" style="right:609.80px;top:618.50px;font-size:9.2px;color:#101010;">6.018</div>
<div class="b" style="left:972px;top:625px;width:85px;height:1px;background:#bebebe;"></div>
<div class="t" style="left:974.60px;top:631.50px;font-size:9.2px;color:#101010;">vcc5</div>
<div class="t" style="right:609.80px;top:631.50px;font-size:9.2px;color:#101010;">5.004</div>
<div class="b" style="left:972px;top:638px;width:85px;height:1px;background:#bebebe;"></div>
<div class="t" style="left:974.60px;top:644.50px;font-size:9.2px;color:#101010;">vccA5</div>
<div class="t" style="right:609.80px;top:644.50px;font-size:9.2px;color:#101010;">4.968</div>
<div class="b" style="left:972px;top:651px;width:85px;height:1px;background:#bebebe;"></div>
<div class="t" style="left:974.60px;top:657.50px;font-size:9.2px;color:#101010;">vcc3V3</div>
<div class="t" style="right:609.80px;top:657.50px;font-size:9.2px;color:#101010;">3.291</div>
<div class="b" style="left:972px;top:664px;width:85px;height:1px;background:#bebebe;"></div>
<div class="t" style="left:974.60px;top:670.50px;font-size:9.2px;color:#101010;">vccA3V3</div>
<div class="t" style="right:609.80px;top:670.50px;font-size:9.2px;color:#101010;">3.302</div>
<div class="b" style="left:972px;top:677px;width:85px;height:1px;background:#bebebe;"></div>
<div class="t" style="left:974.60px;top:683.50px;font-size:9.2px;color:#101010;">vccN5</div>
<div class="t" style="right:609.80px;top:683.50px;font-size:9.2px;color:#101010;">-6.248</div>
<div class="b" style="left:972px;top:690px;width:85px;height:1px;background:#bebebe;"></div>
<div class="t" style="left:974.60px;top:696.50px;font-size:9.2px;color:#101010;">vccN6</div>
<div class="t" style="right:609.80px;top:696.50px;font-size:9.2px;color:#101010;">-6.261</div>
<div class="b" style="left:972px;top:703px;width:85px;height:1px;background:#bebebe;"></div>
<div class="t" style="left:974.60px;top:709.50px;font-size:9.2px;color:#101010;">bt1</div>
<div class="t" style="right:609.80px;top:709.50px;font-size:9.2px;color:#101010;">24.4</div>
<div class="b" style="left:972px;top:716px;width:85px;height:1px;background:#bebebe;"></div>
<div class="t" style="left:974.60px;top:722.50px;font-size:9.2px;color:#101010;">rpm</div>
<div class="t" style="right:609.80px;top:722.50px;font-size:9.2px;color:#101010;">0</div>
<div class="b" style="left:971px;top:744px;width:87px;height:131px;border:1px solid #b2b2b2;background:#fff;"></div>
<div class="t" style="left:974.60px;top:750.50px;font-size:9.2px;color:#101010;">an01V</div>
<div class="t" style="right:609.80px;top:750.50px;font-size:9.2px;color:#101010;">0.510</div>
<div class="b" style="left:972px;top:757px;width:85px;height:1px;background:#bebebe;"></div>
<div class="t" style="left:974.60px;top:763.50px;font-size:9.2px;color:#101010;">an02V</div>
<div class="t" style="right:609.80px;top:763.50px;font-size:9.2px;color:#101010;">0.002</div>
<div class="b" style="left:972px;top:770px;width:85px;height:1px;background:#bebebe;"></div>
<div class="t" style="left:974.60px;top:776.50px;font-size:9.2px;color:#101010;">lam1V</div>
<div class="t" style="right:609.80px;top:776.50px;font-size:9.2px;color:#101010;">0.000</div>
<div class="b" style="left:972px;top:783px;width:85px;height:1px;background:#bebebe;"></div>
<div class="t" style="left:974.60px;top:789.50px;font-size:9.2px;color:#101010;">lam2V</div>
<div class="t" style="right:609.80px;top:789.50px;font-size:9.2px;color:#101010;">0.000</div>
<div class="b" style="left:972px;top:796px;width:85px;height:1px;background:#bebebe;"></div>
<div class="t" style="left:974.60px;top:802.50px;font-size:9.2px;color:#101010;">lam3V</div>
<div class="t" style="right:609.80px;top:802.50px;font-size:9.2px;color:#101010;">0.000</div>
<div class="b" style="left:972px;top:809px;width:85px;height:1px;background:#bebebe;"></div>
<div class="t" style="left:974.60px;top:815.50px;font-size:9.2px;color:#101010;">lam4V</div>
<div class="t" style="right:609.80px;top:815.50px;font-size:9.2px;color:#101010;">2.892</div>
<div class="b" style="left:972px;top:822px;width:85px;height:1px;background:#bebebe;"></div>
<div class="t" style="left:974.60px;top:828.50px;font-size:9.2px;color:#101010;">lam5V</div>
<div class="t" style="right:609.80px;top:828.50px;font-size:9.2px;color:#101010;">0.000</div>
<div class="b" style="left:972px;top:835px;width:85px;height:1px;background:#bebebe;"></div>
<div class="t" style="left:974.60px;top:841.50px;font-size:9.2px;color:#101010;">lam6V</div>
<div class="t" style="right:609.80px;top:841.50px;font-size:9.2px;color:#101010;">0.000</div>
<div class="b" style="left:972px;top:848px;width:85px;height:1px;background:#bebebe;"></div>
<div class="t" style="left:974.60px;top:854.50px;font-size:9.2px;color:#101010;">lam7V</div>
<div class="t" style="right:609.80px;top:854.50px;font-size:9.2px;color:#101010;">0.000</div>
<div class="b" style="left:972px;top:861px;width:85px;height:1px;background:#bebebe;"></div>
<div class="t" style="left:974.60px;top:867.50px;font-size:9.2px;color:#101010;">lam8V</div>
<div class="t" style="right:609.80px;top:867.50px;font-size:9.2px;color:#101010;">0.000</div>
<div class="b" style="left:971px;top:889px;width:87px;height:137px;border:1px solid #b6b6b6;background:#fff;"></div>
<div class="b" style="left:972px;top:928.5px;width:85px;height:13px;background:linear-gradient(180deg,#bcd6fb,#9cc0f8);border-top:1px solid #8eb6f0;"></div>
<div class="b" style="left:972px;top:902px;width:85px;height:1px;background:#c4c4c4;"></div>
<div class="b" style="left:972px;top:915px;width:85px;height:1px;background:#c4c4c4;"></div>
<div class="t" style="left:975.10px;top:895.50px;font-size:9.6px;color:#000;letter-spacing:0.307px;">LAM2CAN Rev 1</div>
<div class="b" style="left:972px;top:903px;width:85.3px;height:13px;overflow:hidden;">
<div class="t" style="left:3.00px;top:5.50px;font-size:9.6px;color:#000;letter-spacing:0.340px;">S_LAM2CAN_A 3.1</div>
</div>
<div class="t" style="left:975.40px;top:921.50px;font-size:9.6px;color:#000;letter-spacing:-0.640px;">06745</div>
<div class="t" style="left:975.40px;top:934.50px;font-size:9.6px;color:#000;letter-spacing:-0.242px;">Cal good</div>
</body></html>
